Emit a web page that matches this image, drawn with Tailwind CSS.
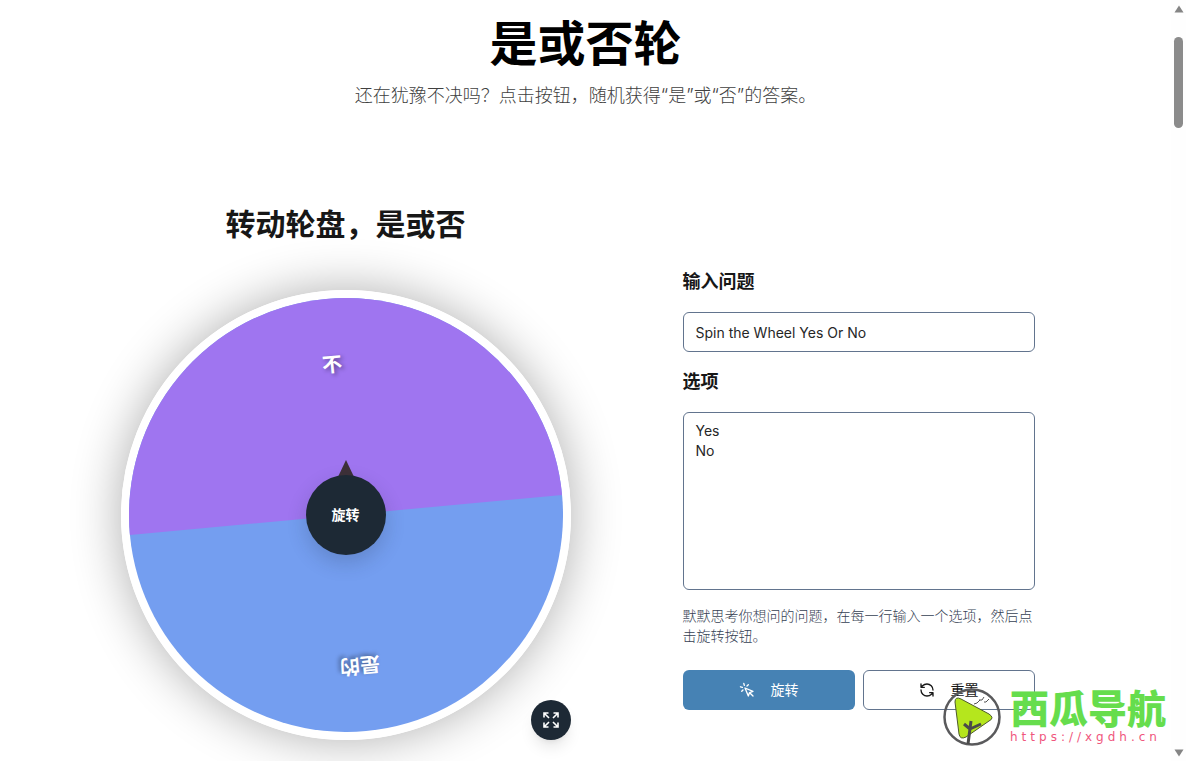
<!DOCTYPE html>
<html lang="zh-CN">
<head>
  <meta charset="UTF-8" />
  <meta name="viewport" content="width=device-width, initial-scale=1.0" />
  <title>是或否轮</title>
  <script src="https://cdn.jsdelivr.net/npm/@tailwindcss/browser@4"></script>
</head>
<body class="bg-white font-['Inter','Noto_Sans_CJK_SC',sans-serif] text-neutral-900">

  <div class="relative flex h-screen overflow-hidden">

    <main class="flex-1">
      <!-- Header -->
      <header class="pt-5 text-center">
        <h1 class="text-5xl leading-[48px] font-bold text-black">是或否轮</h1>
        <p class="mt-3.5 text-lg leading-7 font-light text-neutral-700">还在犹豫不决吗？点击按钮，随机获得“是”或“否”的答案。</p>
      </header>

      <section class="mt-24 flex justify-center gap-28 pr-4">
        <!-- Wheel -->
        <div class="w-[450px]">
          <h2 class="text-center text-3xl leading-9 font-bold">转动轮盘，是或否</h2>

          <div class="relative mt-12">
            <div class="aspect-square rounded-full border-8 border-white shadow-[0_0_50px_rgba(0,0,0,0.32)]">
              <svg id="wheel" viewBox="-217 -217 434 434" class="block w-full text-xl font-bold">
                <g transform="rotate(-5.3)">
                  <circle r="217" fill="#749ef0" />
                  <path d="M-217 0A217 217 0 0 1 217 0Z" fill="#9f75f0" />
                  <text y="-144" text-anchor="middle" fill="#fff" class="[text-shadow:2px_2px_4px_rgba(0,0,0,0.4)]">不</text>
                  <text y="-144" text-anchor="middle" fill="#fff" transform="rotate(180)" class="[text-shadow:2px_2px_4px_rgba(0,0,0,0.4)]">是的</text>
                </g>
              </svg>
            </div>

            <!-- Pointer and hub -->
            <div class="absolute inset-0 flex items-center justify-center">
              <div class="relative">
                <svg viewBox="0 0 20 20" class="absolute -top-4 left-1/2 size-5 -translate-x-1/2"><path d="M10 1L19 20H1Z" fill="#3d3038" /></svg>
                <button type="button" class="spin relative block size-20 rounded-full bg-[#1d2935] text-sm font-bold text-white shadow-[0_8px_20px_rgba(30,41,59,0.2)]">旋转</button>
              </div>
            </div>

            <button type="button" aria-label="全屏" class="absolute right-0 bottom-0 flex size-10 items-center justify-center rounded-full bg-[#1d2935] shadow-lg">
              <svg viewBox="0 0 16 16" class="size-4" fill="none" stroke="#fff" stroke-width="1.600">
                <path d="M1 5.500V1H5.500M1.500 1.500L6 6M10.500 1H15V5.500M14.500 1.500L10 6M1 10.500V15H5.500M1.500 14.500L6 10M15 10.500V15H10.500M14.500 14.500L10 10" />
              </svg>
            </button>
          </div>
        </div>

        <!-- Form -->
        <form class="w-[352px] pt-[62px]" onsubmit="return false">
          <label for="question" class="block text-lg leading-7 font-bold">输入问题</label>
          <input id="question" type="text" value="Spin the Wheel Yes Or No"
            class="mt-4 block h-10 w-full rounded-md border border-slate-500 px-3 text-sm text-neutral-800" />

          <label for="options" class="mt-4 block text-lg leading-7 font-bold">选项</label>
          <textarea id="options" class="mt-4 block h-[178px] w-full resize-none rounded-md border border-slate-500 px-3 py-2 text-sm text-neutral-800">Yes
No</textarea>

          <p class="mt-4 text-sm font-light text-gray-700">默默思考你想问的问题，在每一行输入一个选项，然后点击旋转按钮。</p>

          <div class="mt-6 grid grid-cols-2 gap-2">
            <button type="button" class="spin flex h-10 items-center justify-center gap-4 rounded-md bg-[#4682b4] text-sm text-white">
              <svg viewBox="0 0 24 24" class="size-4" fill="none" stroke="currentColor" stroke-width="2" stroke-linecap="round" stroke-linejoin="round">
                <path d="M9 9l5 12 1.800-5.200L21 14ZM7.200 2.200L8 5.100M5.100 8L2.200 7.200M14 4.100L12 6M6 12L4.100 14M16 16l5 5" />
              </svg>
              旋转
            </button>
            <button type="reset" class="flex h-10 items-center justify-center gap-4 rounded-md border border-slate-500 text-sm text-neutral-900">
              <svg viewBox="0 0 24 24" class="size-4" fill="none" stroke="currentColor" stroke-width="2" stroke-linecap="round" stroke-linejoin="round">
                <path d="M21 12a9 9 0 0 0-9-9 9.750 9.750 0 0 0-6.740 2.740L3 8M3 3v5h5M3 12a9 9 0 0 0 9 9 9.750 9.750 0 0 0 6.740-2.740L21 16M16 16h5v5" />
              </svg>
              重置
            </button>
          </div>
        </form>
      </section>
    </main>

    <!-- Scrollbar -->
    <div class="flex w-[15px] flex-col items-center justify-between bg-[#fefefe] pt-[5px] pb-1">
      <div class="flex flex-col items-center gap-6">
        <svg viewBox="0 0 10 8" class="h-2 w-[10px]"><path d="M5 0.500L9.500 7.500H0.500Z" fill="#858585" /></svg>
        <div class="h-[91px] w-[9px] rounded-full bg-[#8b8b8b]"></div>
      </div>
      <svg viewBox="0 0 10 8" class="h-2 w-[10px]"><path d="M5 7.500L9.500 0.500H0.500Z" fill="#858585" /></svg>
    </div>

    <!-- Site badge -->
    <div class="pointer-events-none absolute right-5 bottom-3.5 flex items-center gap-2">
      <svg viewBox="0 0 60 60" class="size-[60px]" fill="none">
        <circle cx="30" cy="30" r="27.500" stroke="#5a5a5c" stroke-width="2.500" />
        <path d="M13 15Q13 9 19 12L47 27Q53 31 47 34L24 50Q18 53 17 47Z" fill="#b5e61d" stroke="#4d5b2c" />
        <path d="M26 57L29 34M28 42L22 37M28 42L39 37" stroke="#4a4a4a" stroke-width="3" />
        <path d="M32 17l3-1 3-3M37 13l3 0 2-3M42 15l2 0 3-3" stroke="#555" />
      </svg>
      <div class="w-[156px]">
        <div class="text-[39px] leading-10 font-black text-[#66dd4d]">西瓜导航</div>
        <div class="font-['DejaVu_Sans'] text-xs tracking-[4px] whitespace-nowrap text-[#f0567d]">https://xgdh.cn</div>
      </div>
    </div>
  </div>

  <script>
    // rotate the wheel when either spin button is pressed
    const wheel = document.getElementById("wheel");
    let angle = 0;

    function spin() {
      angle += 1440 + Math.floor(Math.random() * 360);
      wheel.style.transition = "transform 4s ease-out";
      wheel.style.transform = `rotate(${angle}deg)`;
    }

    document.querySelectorAll(".spin").forEach(btn => btn.addEventListener("click", spin));
  </script>

</body>
</html>
